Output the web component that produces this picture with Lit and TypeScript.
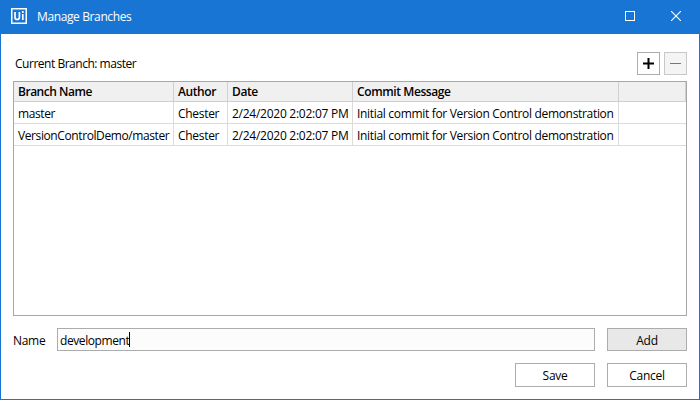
import { LitElement, html, css } from "lit";
import { customElement, state } from "lit/decorators.js";

interface Branch {
  name: string;
  author: string;
  date: string;
  message: string;
}

@customElement("app-root")
export class AppRoot extends LitElement {
  static styles = css`
    :host {
      display: block;
      font-family: "Open Sans", "Noto Sans", sans-serif;
      font-size: 12px;
      line-height: 16px;
      letter-spacing: -0.3px;
      color: #000;
    }
    * {
      box-sizing: border-box;
    }
    .window {
      width: 700px;
      height: 400px;
      display: flex;
      flex-direction: column;
      background: #fff;
      border: 1px solid #1975d3;
      border-top: 0;
      overflow: hidden;
      white-space: nowrap;
    }
    .titlebar {
      flex: none;
      height: 34px;
      display: flex;
      align-items: center;
      background: #1975d3;
      color: #fff;
      padding: 0 18px 2px 10px;
    }
    .titlebar svg,
    .tool svg {
      display: block;
      flex: none;
    }
    .title {
      margin-left: 10px;
      padding-top: 2px;
      flex: 1;
      letter-spacing: -0.38px;
    }
    .maximize {
      margin-right: 36px;
    }
    .body {
      flex: 1;
      display: flex;
      flex-direction: column;
      padding: 18px 12px 12px;
    }
    .top {
      display: flex;
      align-items: center;
      gap: 4px;
      height: 23px;
      margin-bottom: 6px;
    }
    .current {
      flex: 1;
      padding: 1px 0 0 2px;
      letter-spacing: -0.48px;
    }
    .tool,
    .button {
      font: inherit;
      letter-spacing: inherit;
      color: inherit;
      background: #fff;
      border: 1px solid #acacac;
      padding: 0;
      display: flex;
      align-items: center;
      justify-content: center;
    }
    .tool {
      width: 23px;
      height: 23px;
    }
    .tool.disabled {
      background: #f4f4f4;
      border-color: #c8c8c8;
    }
    .table {
      height: 235px;
      border: 1px solid #a5a8a8;
    }
    .row {
      display: grid;
      grid-template-columns: 160px 54px 125px 266px 1fr;
      height: 22px;
    }
    .row.head {
      height: 20px;
      background: #f0f0f0;
      font-weight: 600;
    }
    .cell {
      border-right: 1px solid #dcdcdc;
      border-bottom: 1px solid #dcdcdc;
      padding: 4px 0 0 4px;
    }
    .head .cell {
      padding-top: 2px;
      border-color: #d0d0d0;
      letter-spacing: -0.4px;
    }
    .head .cell:first-child {
      letter-spacing: -0.48px;
    }
    .row:not(.head) .cell:last-child {
      border-right: 0;
    }
    .name {
      letter-spacing: -0.4px;
    }
    .message {
      letter-spacing: -0.32px;
    }
    .date {
      letter-spacing: -0.26px;
    }
    .form {
      display: flex;
      align-items: center;
      height: 23px;
      margin-top: 12px;
    }
    .label {
      width: 44px;
      padding-top: 2px;
    }
    .input {
      width: 538px;
      height: 23px;
      border: 1px solid #acacac;
      background: #fcfcfc;
      margin-right: 12px;
      padding-left: 2px;
      display: flex;
      align-items: center;
    }
    .draft {
      padding-top: 2px;
      letter-spacing: -0.42px;
    }
    .caret {
      width: 1px;
      height: 15px;
      background: #000;
    }
    .button {
      width: 80px;
      height: 100%;
      padding-top: 2px;
    }
    .button.add {
      background: #e8e8e8;
    }
    .actions {
      display: flex;
      justify-content: flex-end;
      gap: 12px;
      height: 24px;
      margin-top: 12px;
    }
  `;

  @state() private branches: Branch[] = ["master", "VersionControlDemo/master"].map((name) => ({
    name,
    author: "Chester",
    date: "2/24/2020 2:02:07 PM",
    message: "Initial commit for Version Control demonstration",
  }));

  @state() private draft = "development";

  render() {
    return html`
      <div class="window">
        <div class="titlebar">
          <svg width="16" height="16" viewBox="0 0 16 16" fill="none" stroke="#fff">
            <rect x=".75" y=".75" width="14.5" height="14.5" stroke-width="1.5" />
            <path d="M4 4v5.2q0 2.3 2.2 2.3t2.2-2.3V4M11.8 6v6M11.8 3v2" stroke-width="1.7" />
          </svg>
          <span class="title">Manage Branches</span>
          <svg class="maximize" width="10" height="10" viewBox="0 0 10 10" fill="none" stroke="#fff">
            <rect x=".5" y=".5" width="9" height="9" />
          </svg>
          <svg width="10" height="10" viewBox="0 0 10 10" stroke="#fff">
            <path d="M0 0L10 10M10 0L0 10" stroke-width="1.1" />
          </svg>
        </div>
        <div class="body">
          <div class="top">
            <span class="current">Current Branch: master</span>
            <button class="tool" aria-label="Add branch">
              <svg width="11" height="11" viewBox="0 0 11 11" stroke="#000" stroke-width="2">
                <path d="M0 5.5H11M5.5 0V11" />
              </svg>
            </button>
            <button class="tool disabled" aria-label="Remove branch">
              <svg width="11" height="11" viewBox="0 0 11 11" stroke="#777">
                <path d="M0 5.5H11" />
              </svg>
            </button>
          </div>
          <div class="table">
            <div class="row head">
              <div class="cell">Branch Name</div>
              <div class="cell">Author</div>
              <div class="cell">Date</div>
              <div class="cell">Commit Message</div>
              <div class="cell"></div>
            </div>
            ${this.branches.map(
              (b) => html`<div class="row">
                <div class="cell name">${b.name}</div>
                <div class="cell author">${b.author}</div>
                <div class="cell date">${b.date}</div>
                <div class="cell message">${b.message}</div>
                <div class="cell"></div>
              </div>`
            )}
          </div>
          <div class="form">
            <span class="label">Name</span>
            <div class="input"><span class="draft">${this.draft}</span><i class="caret"></i></div>
            <button class="button add">Add</button>
          </div>
          <div class="actions">
            <button class="button">Save</button>
            <button class="button">Cancel</button>
          </div>
        </div>
      </div>
    `;
  }
}
